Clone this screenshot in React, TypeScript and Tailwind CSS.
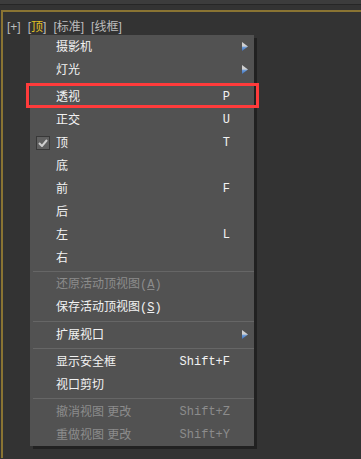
import React from 'react';

type Item =
  | { sep: true }
  | {
      sep?: false;
      label: React.ReactNode;
      key?: string;
      sub?: boolean;
      checked?: boolean;
      disabled?: boolean;
    };

const cjk = { fontFamily: '"Liberation Sans", "Noto Sans CJK SC", sans-serif' };
const mono = { fontFamily: '"Liberation Mono", "Noto Sans CJK SC", monospace' };

const Acc = ({ c }: { c: string }) => (
  <span style={mono}>
    (<span className="underline">{c}</span>)
  </span>
);

const items: Item[] = [
  { label: '摄影机', sub: true },
  { label: '灯光', sub: true },
  { sep: true },
  { label: '透视', key: 'P' },
  { label: '正交', key: 'U' },
  { label: '顶', key: 'T', checked: true },
  { label: '底' },
  { label: '前', key: 'F' },
  { label: '后' },
  { label: '左', key: 'L' },
  { label: '右' },
  { sep: true },
  { label: <>还原活动顶视图<Acc c="A" /></>, disabled: true },
  { label: <>保存活动顶视图<Acc c="S" /></> },
  { sep: true },
  { label: '扩展视口', sub: true },
  { sep: true },
  { label: '显示安全框', key: 'Shift+F' },
  { label: '视口剪切' },
  { sep: true },
  { label: '撤消视图 更改', key: 'Shift+Z', disabled: true },
  { label: '重做视图 更改', key: 'Shift+Y', disabled: true },
];

function SubArrow() {
  return (
    <svg width="6" height="9" viewBox="0 0 6 9">
      <defs>
        <linearGradient id="arr" x1="0" y1="0" x2="0" y2="1">
          <stop offset="0.45" stopColor="#d0d0d0" />
          <stop offset="0.6" stopColor="#6a9ad8" />
          <stop offset="1" stopColor="#3f6fb8" />
        </linearGradient>
      </defs>
      <polygon points="0,0 6,4.5 0,9" fill="url(#arr)" />
    </svg>
  );
}

function CheckBox() {
  return (
    <div className="w-[14px] h-[14px] border border-[#383838] bg-[#606060] flex items-center justify-center">
      <svg width="10" height="8" viewBox="0 0 10 8">
        <path d="M1 4 L4 7 L9 1" stroke="#cfcfcf" strokeWidth="2" fill="none" />
      </svg>
    </div>
  );
}

export default function App() {
  return (
    <div className="w-[361px] h-[459px] bg-[#333333] relative overflow-hidden" style={cjk}>
      {/* top strip */}
      <div className="h-[5px] bg-[#3c3c3c] border-b border-[#262626]" />

      {/* viewport frame */}
      <div className="mt-[5px] ml-[1px] h-[448px] border-t-2 border-l-2 border-[#8a7433]">
        <div className="flex items-center gap-[7px] pl-[4px] pt-[8px] text-[12px] text-[#bdbdbd] leading-[14px]">
          <span>[+]</span>
          <span>
            [<span className="text-[#e0c022]">顶</span>]
          </span>
          <span>[标准]</span>
          <span>[线框]</span>
        </div>
      </div>

      {/* context menu */}
      <div className="absolute left-[30px] top-[35px] w-[224px] bg-[#525252] shadow-[3px_3px_0_rgba(0,0,0,0.35)]">
        {items.map((it, i) =>
          it.sep ? (
            <div key={i} className="h-[4px] flex items-center pl-[3px]">
              <div className="h-px w-full bg-[#666666]" />
            </div>
          ) : (
            <div
              key={i}
              className={`h-[23px] flex items-center text-[12px] ${
                it.disabled ? 'text-[#8c8c8c]' : 'text-[#f2f2f2]'
              }`}
            >
              <div className="w-[26px] pl-[6px] shrink-0 flex items-center">
                {it.checked && <CheckBox />}
              </div>
              <div className="flex-1 whitespace-pre">{it.label}</div>
              {it.key && (
                <div className="pr-[24px] text-[12px]" style={mono}>
                  {it.key}
                </div>
              )}
              {it.sub && (
                <div className="pr-[6px] flex items-center">
                  <SubArrow />
                </div>
              )}
            </div>
          )
        )}
      </div>

      {/* highlight box */}
      <div className="absolute left-[26px] top-[83px] w-[233px] h-[25px] border-[3px] border-[#ff3b3b]" />
    </div>
  );
}
